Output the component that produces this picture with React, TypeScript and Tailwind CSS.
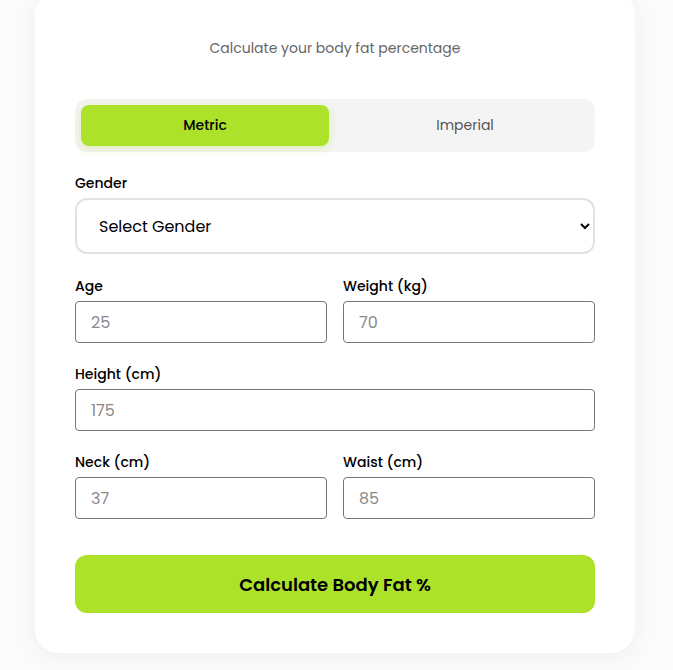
import { useState } from "react";

const FONT = { fontFamily: "Poppins, 'Open Sans', 'Noto Sans', sans-serif" };

function Field({ label, placeholder }: { label: string; placeholder: string }) {
  return (
    <label className="flex flex-col">
      <span className="mb-[5px] text-[14px] font-medium leading-[20px] text-black">{label}</span>
      <input
        className="h-[42px] w-full rounded-[4px] border border-[#767676] px-[15px] text-[16px] text-black placeholder:text-[#8a8a8a] focus:outline-none"
        placeholder={placeholder}
        type="number"
      />
    </label>
  );
}

export default function App() {
  const [unit, setUnit] = useState<"metric" | "imperial">("metric");

  return (
    <main className="min-h-[670px] bg-[#fbfbfb] px-[35px] pb-[17px]" style={FONT}>
      <section className="mt-[-9px] w-[600px] rounded-[24px] bg-white px-[40px] pb-[40px] pt-[46px] shadow-[0_4px_24px_rgba(0,0,0,0.05)]">
        <p className="text-center text-[14px] leading-[22px] text-[#666]">Calculate your body fat percentage</p>

        <div className="mt-[40px] flex gap-[12px] rounded-[12px] bg-[#f4f4f4] p-[6px]">
          <button
            className={`h-[41px] flex-1 rounded-[8px] text-[14px] font-medium ${
              unit === "metric" ? "bg-[#ade22b] text-black shadow-[0_3px_10px_rgba(173,226,43,0.3)]" : "text-[#555]"
            }`}
            type="button"
            onClick={() => setUnit("metric")}
          >
            Metric
          </button>
          <button
            className={`h-[41px] flex-1 rounded-[8px] text-[14px] ${
              unit === "imperial" ? "bg-[#ade22b] font-medium text-black" : "text-[#555]"
            }`}
            type="button"
            onClick={() => setUnit("imperial")}
          >
            Imperial
          </button>
        </div>

        <div className="mt-[21px] flex flex-col">
          <span className="mb-[5px] text-[14px] font-medium leading-[20px] text-black">Gender</span>
          <select className="h-[56px] w-full rounded-[12px] border-2 border-[#e2e2e2] bg-white pl-[18px] pr-[6px] text-[16px] text-black focus:outline-none">
            <option>Select Gender</option>
            <option>Male</option>
            <option>Female</option>
          </select>
        </div>

        <div className="mt-[22px] grid grid-cols-2 gap-x-[16px] gap-y-[21px]">
          <Field label="Age" placeholder="25" />
          <Field label="Weight (kg)" placeholder="70" />
          <div className="col-span-2">
            <Field label="Height (cm)" placeholder="175" />
          </div>
          <Field label="Neck (cm)" placeholder="37" />
          <Field label="Waist (cm)" placeholder="85" />
        </div>

        <button
          className="mt-[36px] h-[58px] w-full rounded-[12px] bg-[#ade22b] text-[18px] font-semibold text-black"
          type="button"
        >
          Calculate Body Fat %
        </button>
      </section>
    </main>
  );
}
